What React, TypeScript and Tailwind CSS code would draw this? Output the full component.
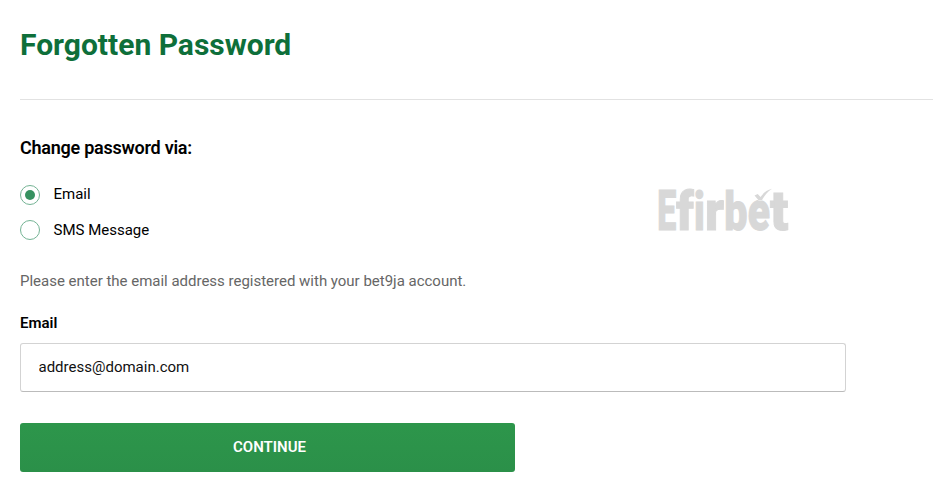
import { useState } from 'react'

const METHODS = ['Email', 'SMS Message']

// each letter of the logo: [glyph, left edge, drawn width, font size]
const LOGO: [string, number, number, number][] = [
  ['E', 12.2, 19, 56],
  ['f', 31.3, 17.5, 54],
  ['i', 49, 10.8, 54],
  ['r', 60, 19, 56],
  ['b', 79.3, 23.2, 54],
  ['e', 102.7, 22.2, 56],
  ['t', 125.1, 18.4, 56],
]

function Watermark() {
  return (
    <svg width="160" height="80" viewBox="0 0 160 80" className="pointer-events-none absolute left-[645px] top-[170px]" fill="#d8d8d8">
      <g stroke="#d8d8d8" strokeWidth="1" className="font-['Roboto',sans-serif] font-black">
        {LOGO.map(([glyph, x, width, size]) => (
          <text key={glyph} x={x} y="60" fontSize={size} textLength={width} lengthAdjust="spacingAndGlyphs">
            {glyph}
          </text>
        ))}
      </g>
      {/* tick over the e */}
      <path d="M109.500 25.500l3.200-1.600 2.800 3.200c3-4.500 6.500-7.200 11.500-8.400-4.500 3-7.500 6.500-10.200 11.800h-3z" stroke="#fff" strokeWidth="1" paintOrder="stroke" />
    </svg>
  )
}

export default function App() {
  const [method, setMethod] = useState('Email')
  const [email, setEmail] = useState('address@domain.com')

  return (
    <div className="relative h-[504px] w-full overflow-hidden bg-white pl-5 font-['Roboto',sans-serif] text-[15px] text-black">
      <h1 className="pt-6 text-[30px] leading-[41px] font-bold text-[#0e6f3a]">Forgotten Password</h1>
      <hr className="mt-[34px] border-[#e2e2e2]" />
      <h2 className="mt-[35px] text-[18px] leading-[25px] font-semibold tracking-[-0.25px]">Change password via:</h2>

      <div className="mt-[25px] flex flex-col gap-[15px]">
        {METHODS.map(m => (
          <label key={m} className="flex h-5 items-center gap-[13.5px]">
            <input type="radio" className="sr-only" checked={method === m} onChange={() => setMethod(m)} />
            <span className="flex size-5 items-center justify-center rounded-full border border-[#74b394]">
              {method === m && <span className="size-[10.5px] rounded-full bg-[#35915f]" />}
            </span>
            <span className={m === 'Email' ? '-mt-[2px]' : ''}>{m}</span>
          </label>
        ))}
      </div>

      <p className="mt-[31px] leading-5 tracking-[-0.01px] text-[#666]">Please enter the email address registered with your bet9ja account.</p>
      <label htmlFor="email" className="mt-[22px] block leading-5 font-semibold">Email</label>
      <input
        id="email"
        value={email}
        onChange={e => setEmail(e.target.value)}
        className="mt-[10px] block h-[49px] w-[826px] rounded-[3px] border border-[#d3d3d3] border-b-[#bbb] px-[17.5px] pb-[2px] text-[#111]"
      />
      <button type="button" className="mt-[31px] block h-[49px] w-[495px] rounded-[3px] bg-linear-to-b from-[#2d964b] to-[#2b9049] pl-[4px] font-semibold text-white">
        CONTINUE
      </button>
      <Watermark />
    </div>
  )
}
